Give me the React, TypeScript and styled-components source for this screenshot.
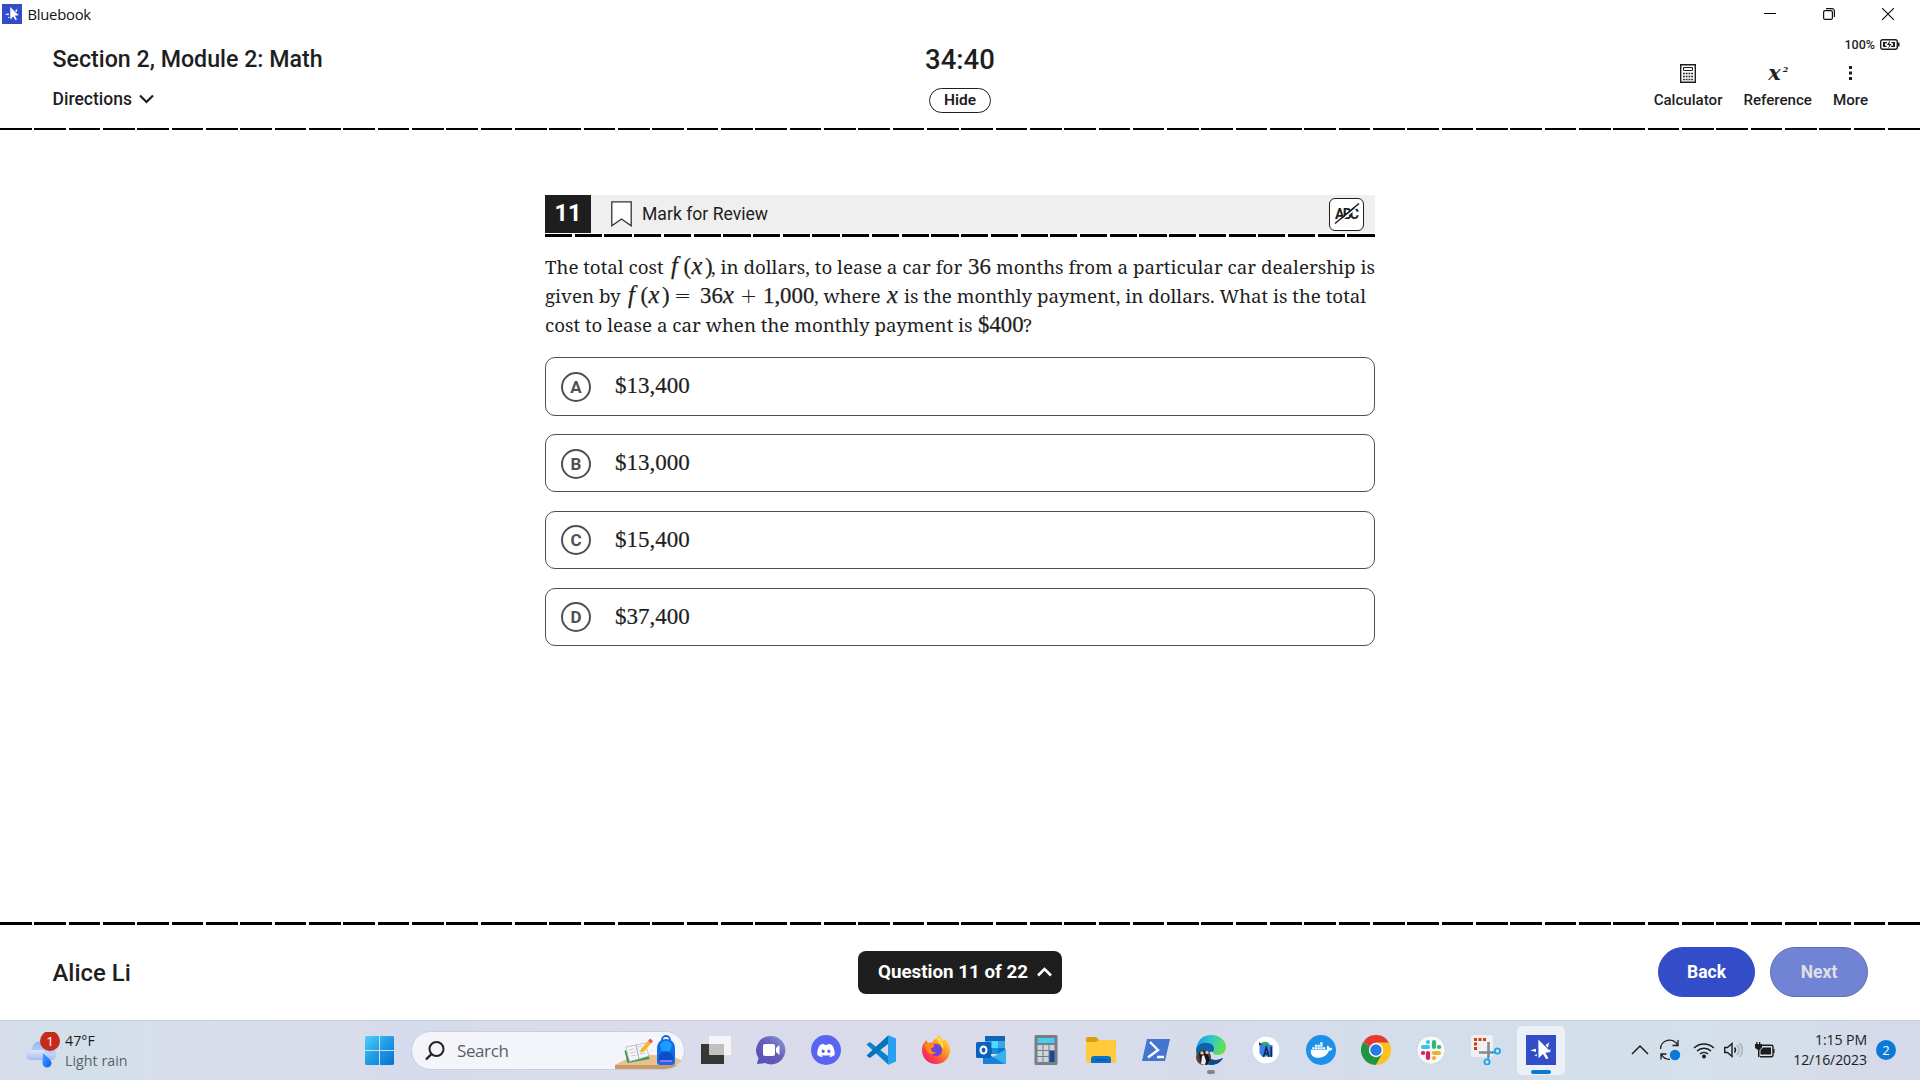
import React from "react";
import styled, { createGlobalStyle } from "styled-components";
import { FaDiscord, FaDocker } from "react-icons/fa6";

const GlobalStyle = createGlobalStyle`
  * { box-sizing: border-box; }
  body { margin: 0; background: #fff; overflow: hidden; }
  svg { display: block; flex: none; }
  button { font: inherit; padding: 0; margin: 0; border: 0; background: none; color: inherit; }
`;

const roboto = `Roboto, "Liberation Sans", sans-serif`;
const system = `"Open Sans", "Noto Sans", sans-serif`;
const math = `"Liberation Serif", serif`;

const Page = styled.div`
  width: 1920px;
  height: 1080px;
  display: flex;
  flex-direction: column;
  background: #fff;
  color: #1e1e1e;
  font-family: ${roboto};
`;

/* ---------- shared ---------- */

const DashRow = styled.div<{ $thick: number }>`
  display: flex;
  justify-content: space-between;
  height: ${(p) => p.$thick}px;
  flex: none;
`;
const Dash = styled.i<{ $w: number }>`
  width: ${(p) => p.$w}px;
  flex: none;
  background: #000;
`;
const Dashes = ({ count, w, thick }: { count: number; w: number; thick: number }) => (
  <DashRow $thick={thick}>
    {Array.from({ length: count }, (_, i) => (
      <Dash key={i} $w={w} />
    ))}
  </DashRow>
);

const Label = styled.span<{ $size: number; $weight?: number; $lh: number }>`
  font-size: ${(p) => p.$size}px;
  font-weight: ${(p) => p.$weight ?? 400};
  line-height: ${(p) => p.$lh}px;
  white-space: nowrap;
`;

/* ---------- window title bar ---------- */

const TitleBar = styled.div`
  height: 28px;
  flex: none;
  display: flex;
  align-items: center;
  padding: 0 26px 0 2px;
`;
const AppName = styled.span`
  margin-left: 5.5px;
  font: 400 14.8px/20px ${system};
  letter-spacing: -0.25px;
  color: #111;
`;
const WindowControls = styled.div`
  margin-left: auto;
  display: flex;
  gap: 47px;
`;

const StarLogo = ({ size }: { size: number }) => (
  <svg width={size} height={size} viewBox="0 0 30 30">
    <rect width="30" height="30" fill="#324dc7" />
    <path d="M12.300 4.500 24.800 17l-5.400.7 3 5.600-2.200 1-3.200-5.400-4.500 4.300z" fill="#fff" />
    <path d="M4.300 15.300 10 13.700v3.200zM23.300 7.300l-1.500 5.400-2.300-2.400zM25.200 14.600l-2.700.5 1.200 1.200zM8.500 20.500l2.300-1.800v2.600z" fill="#fff" />
  </svg>
);

/* ---------- exam header ---------- */

const Header = styled.header`
  height: 100px;
  flex: none;
  display: grid;
  grid-template-columns: 1fr 1fr 1fr;
`;
const HeaderLeft = styled.div`
  padding: 17px 0 0 52.5px;
  display: flex;
  flex-direction: column;
  gap: 15px;
`;
const DirectionsButton = styled.button`
  display: flex;
  align-items: center;
  gap: 7px;
`;
const HeaderCenter = styled.div`
  padding-top: 18px;
  display: flex;
  flex-direction: column;
  align-items: center;
  gap: 14px;
`;
const HideButton = styled.button`
  width: 62px;
  height: 25px;
  padding-bottom: 1px;
  border: 1px solid #1e1e1e;
  border-radius: 13px;
  display: flex;
  justify-content: center;
  align-items: center;
`;
const HeaderRight = styled.div`
  display: flex;
  flex-direction: column;
  align-items: flex-end;
  padding-top: 10px;
`;
const PowerStatus = styled.div`
  display: flex;
  align-items: center;
  gap: 5px;
  height: 14px;
  margin-right: 20px;
  svg { margin-bottom: 1px; }
`;
const Tools = styled.div`
  display: flex;
  gap: 21px;
  margin: 10px 52px 0 0;
`;
const Tool = styled.button`
  display: flex;
  flex-direction: column;
  align-items: center;
  gap: 6px;
`;
const ToolIcon = styled.span`
  height: 22px;
  display: flex;
  align-items: center;
`;
const Formula = styled.span`
  font: italic 700 21px/22px "DejaVu Serif", serif;
  display: flex;
  align-items: flex-start;
  padding-left: 1px;
`;
const FormulaPower = styled.span`
  font-size: 8px;
  line-height: 14px;
  margin-left: 2px;
`;

/* ---------- question ---------- */

const Content = styled.main`
  flex: 1;
  display: flex;
  justify-content: center;
  padding-top: 65px;
`;
const Question = styled.section`
  width: 830px;
`;
const QuestionBar = styled.div`
  height: 38px;
  margin-bottom: 1px;
  background: #efefef;
  display: flex;
  align-items: center;
  padding-right: 11px;
`;
const QuestionNumber = styled.div`
  width: 46px;
  height: 38px;
  background: #1e1e1e;
  color: #fff;
  text-align: center;
  font-size: 23.5px;
  font-weight: 700;
  line-height: 36px;
`;
const MarkButton = styled.button`
  display: flex;
  align-items: center;
  gap: 10px;
  margin-left: 20px;
`;
const CrossOutButton = styled.button`
  margin-left: auto;
  width: 35px;
  height: 33px;
  border: 1px solid #1e1e1e;
  border-radius: 6px;
  background: #fff;
  display: flex;
  align-items: center;
  justify-content: center;
`;
const Prompt = styled.div`
  padding-top: 15px;
  height: 120px;
`;
const Line = styled.div`
  display: flex;
  align-items: baseline;
  height: 29px;
  line-height: 29px;
  white-space: pre;
`;
const Prose = styled.span<{ $w: number }>`
  width: ${(p) => p.$w}px;
  flex: none;
  font-family: "Noto Serif", "DejaVu Serif Condensed", serif;
  font-size: 18.74px;
`;
const Term = styled.span<{ $w: number; $italic?: boolean }>`
  width: ${(p) => p.$w}px;
  flex: none;
  font-family: ${math};
  font-size: ${(p) => (p.$italic ? 24.5 : 22.8)}px;
  font-style: ${(p) => (p.$italic ? "italic" : "normal")};
  line-height: ${(p) => (p.$italic ? 27 : 29)}px;
  -webkit-text-stroke: 0.25px #1e1e1e;
`;
const Operator = styled.span<{ $w: number }>`
  width: ${(p) => p.$w}px;
  flex: none;
  font: 200 20.5px/24px "DejaVu Sans", sans-serif;
`;
const FunctionOfX = ({ w }: { w: number }) => (
  <>
    <Term $w={12.5} $italic>f</Term>
    <Term $w={8}>(</Term>
    <Term $w={13.5} $italic>x</Term>
    <Term $w={w - 34}>)</Term>
  </>
);
const Choices = styled.div`
  display: flex;
  flex-direction: column;
  gap: 18.4px;
  padding-top: 0.2px;
`;
const Choice = styled.button`
  height: 58.4px;
  border: 1px solid #505050;
  border-radius: 10px;
  display: flex;
  align-items: center;
  padding-left: 15px;
`;
const ChoiceLetter = styled.span`
  width: 30px;
  height: 30px;
  margin-top: 1px;
  border: 2px solid #505050;
  border-radius: 50%;
  color: #505050;
  font-size: 17px;
  font-weight: 700;
  line-height: 26px;
  text-align: center;
`;
const ChoiceValue = styled.span`
  margin-left: 24px;
  font: 400 23px/30px ${math};
  -webkit-text-stroke: 0.2px #1e1e1e;
`;

/* ---------- exam footer ---------- */

const Footer = styled.footer`
  height: 95px;
  flex: none;
  display: grid;
  grid-template-columns: 1fr auto 1fr;
  align-items: center;
  padding: 0 52px 1px;
`;
const Student = styled.div`
  padding: 1px 0 0 0.5px;
  font-size: 23.9px;
  font-weight: 500;
  line-height: 28px;
`;
const NavButton = styled.button`
  width: 204px;
  height: 43px;
  border-radius: 8px;
  background: #1e1e1e;
  color: #fff;
  display: flex;
  align-items: center;
  padding-left: 20px;
  gap: 9px;
`;
const Actions = styled.div`
  display: flex;
  justify-content: flex-end;
  gap: 15px;
`;
const ActionButton = styled.button<{ $muted?: boolean }>`
  width: ${(p) => (p.$muted ? 98 : 97)}px;
  height: 50px;
  border-radius: 25px;
  border: 1px solid ${(p) => (p.$muted ? "#6270a8" : "#324dc7")};
  background: ${(p) => (p.$muted ? "#7083d5" : "#324dc7")};
  color: ${(p) => (p.$muted ? "#e0e0e4" : "#fff")};
`;

/* ---------- taskbar ---------- */

const Taskbar = styled.nav`
  height: 60px;
  flex: none;
  display: flex;
  align-items: center;
  border-top: 1px solid #c6ccdc;
  background: linear-gradient(
    90deg,
    #d6dcea 0,
    #d2e0e9 90px,
    #d7deea 170px,
    #d9dcea 340px,
    #d5dbed 400px,
    #dadceb 600px,
    #d9dbea 1000px,
    #d5dceb 1300px,
    #d3e0ea 1640px,
    #d5dfea 1780px,
    #d6d9e9 1880px
  );
  font-family: ${system};
`;
const Weather = styled.div`
  width: 339px;
  display: flex;
  align-items: center;
  padding-left: 26px;
  gap: 5px;
`;
const WeatherText = styled.div`
  display: flex;
  flex-direction: column;
`;
const WeatherLine = styled.span<{ $dim?: boolean }>`
  font-size: 14.2px;
  line-height: 20px;
  letter-spacing: 0.05px;
  color: ${(p) => (p.$dim ? "#5c6068" : "#1c1c1c")};
`;
const StartButton = styled.button`
  margin-left: 26px;
  width: 29px;
`;
const SearchBox = styled.div`
  margin-left: 17px;
  width: 274px;
  height: 39px;
  border-radius: 20px;
  border: 1px solid #c9cedd;
  background: #f3f5fa;
  display: flex;
  align-items: center;
  padding-left: 13px;
  overflow: hidden;
`;
const SearchText = styled.span`
  margin-left: 12px;
  font-size: 17px;
  line-height: 24px;
  letter-spacing: -0.4px;
  color: #5b5e66;
  flex: 1;
`;
const Apps = styled.div`
  display: flex;
  margin-left: 3.5px;
  height: 59px;
  align-items: center;
`;
const AppSlot = styled.button`
  width: 55px;
  height: 59px;
  display: flex;
  flex-direction: column;
  align-items: center;
  padding-top: 5px;
`;
const AppTile = styled.span<{ $active?: boolean }>`
  width: 48px;
  height: 49px;
  border-radius: 5px;
  background: ${(p) => (p.$active ? "#ecf0f7" : "transparent")};
  display: flex;
  flex-direction: column;
  align-items: center;
  padding-top: 9px;
`;
const Running = styled.i<{ $active?: boolean }>`
  width: ${(p) => (p.$active ? 20 : 8)}px;
  height: 4px;
  margin-top: 5px;
  border-radius: 2px;
  background: ${(p) => (p.$active ? "#0a7ad8" : "#80858c")};
`;
const Tray = styled.div`
  margin-left: auto;
  display: flex;
  align-items: center;
  padding: 0 24px 1px 0;
`;
const TrayIcons = styled.div`
  display: flex;
  align-items: center;
  gap: 10px;
  margin-right: 17px;
`;
const Clock = styled.div`
  width: 75px;
  display: flex;
  flex-direction: column;
  align-items: flex-end;
  font-size: 14.1px;
  line-height: 20px;
  letter-spacing: -0.1px;
  white-space: nowrap;
  color: #1c1c1c;
`;
const Count = styled.span`
  margin-left: 9px;
  width: 20px;
  height: 20px;
  border-radius: 50%;
  background: #0a7ad8;
  color: #fff;
  font-size: 13px;
  line-height: 20px;
  text-align: center;
`;

const Icon = ({ children }: { children: React.ReactNode }) => (
  <svg width="30" height="30" viewBox="0 0 30 30">
    {children}
  </svg>
);

const WeatherIcon = () => (
  <svg width="34" height="38" viewBox="0 0 34 38">
    <defs>
      <linearGradient id="cloud" x1="0" y1="0" x2="0" y2="1">
        <stop offset="0" stopColor="#8fb4f0" />
        <stop offset="1" stopColor="#d5e2f8" />
      </linearGradient>
      <linearGradient id="cloudFront" x1="0" y1="0" x2="0" y2="1">
        <stop offset="0" stopColor="#dde7fa" />
        <stop offset="1" stopColor="#a3bdf0" />
      </linearGradient>
      <linearGradient id="drop" x1="0" y1="0" x2="1" y2="1">
        <stop offset="0" stopColor="#4aa3ff" />
        <stop offset="1" stopColor="#0a5cf0" />
      </linearGradient>
    </defs>
    <path d="M6 17a9 9 0 0 1 17-3 7 7 0 0 1 7 8 5 5 0 0 1-5 6H6a5.500 5.500 0 0 1 0-11z" fill="url(#cloud)" />
    <path d="M5 18h11a6 6 0 0 1 5 4h9a5 5 0 0 1-5 6H6a5 5 0 0 1-6-5 5 5 0 0 1 5-5z" fill="url(#cloudFront)" />
    <path d="M17 21c5 5 8.500 7 8.500 10a4.500 4.500 0 0 1-9 0c0-3 .5-6 .5-10z" fill="url(#drop)" />
    <circle cx="24" cy="9" r="10" fill="#c42b1c" />
    <text x="24" y="14" textAnchor="middle" fontSize="13.500" fill="#fff" fontFamily='"Open Sans", sans-serif'>
      1
    </text>
  </svg>
);

const StartIcon = () => (
  <svg width="29" height="29" viewBox="0 0 29 29">
    <defs>
      <linearGradient id="win" gradientUnits="userSpaceOnUse" x1="0" y1="0" x2="29" y2="29">
        <stop offset="0" stopColor="#4fd0fb" />
        <stop offset=".5" stopColor="#1f9be6" />
        <stop offset="1" stopColor="#0473d0" />
      </linearGradient>
    </defs>
    <path d="M1 0h13v14H0V1zM15 0h13l1 1v13H15zM0 15h14v14H1l-1-1zM15 15h14v13l-1 1H15z" fill="url(#win)" />
  </svg>
);

const SearchArt = () => (
  <svg width="70" height="37" viewBox="0 0 70 37">
    <path d="M1 33 20 23h36l13 6-8 7H1z" fill="#e9c08e" />
    <path d="M1 33h63l-4 4H1z" fill="#c79a68" />
    <path d="m10.500 19 3 12 22-4-1-4-20 4-2.500-9z" fill="#2f9e4f" />
    <path d="m12 15 10-2 3 14-9.500 2.500zM22 13l9-2 4 13-10 3z" fill="#f6f6fa" stroke="#a9abb5" strokeWidth=".7" />
    <path d="m15 18 5-1m-4 4 5-1m-4 4 5-1m2-8 4-1m-3 5 5-1m-4 4 5-1" stroke="#c4c7d2" />
    <path d="m27 17 7-8 3 2.500-7 8-4 1z" fill="#f7b32b" />
    <path d="m34 9 2-2.500 3 2.500-2 2.500z" fill="#ef5350" />
    <path d="M48 8a4 4 0 0 1 8 0" fill="none" stroke="#1b66d8" strokeWidth="1.800" />
    <path d="M43 17c0-7 4-10 9-10s9 3 9 10v12c0 3-1 4-3 4H46c-2 0-3-1-3-4z" fill="#0c6fe8" />
    <path d="M46 14c1-4 3-5 6-5s5 1 6 5l-2 5h-8z" fill="#1e9bff" />
    <path d="M45 25c0-4 3-5 7-5s7 1 7 5v4H45z" fill="#0a4fc4" />
    <path d="M46 29h12" stroke="#a66bf0" strokeWidth="2" />
  </svg>
);

const TaskViewIcon = () => (
  <Icon>
    <path d="M0 9h23v20H0z" fill="#363632" />
    <path d="M8 1h22v19H8z" fill="#f5f5f5" />
    <path d="M8 9h15v11H8z" fill="#bfc0bf" />
  </Icon>
);
const ChatIcon = () => (
  <Icon>
    <defs>
      <linearGradient id="chat" x1="0" y1="1" x2="1" y2="0">
        <stop offset="0" stopColor="#5050b8" />
        <stop offset=".55" stopColor="#6c5cb8" />
        <stop offset="1" stopColor="#7fa6dd" />
      </linearGradient>
    </defs>
    <path d="M15 1a14.200 14.200 0 1 1-6 27L1 29l1.500-6A14.200 14.200 0 0 1 15 1z" fill="url(#chat)" />
    <rect x="7" y="9" width="12" height="12" rx="2" fill="#fff" />
    <path d="m20 13 3.500-3v10L20 17z" fill="#fff" />
  </Icon>
);
const DiscordIcon = () => (
  <Icon>
    <circle cx="15" cy="15" r="15" fill="#5865f2" />
    <FaDiscord x="5.500" y="6" width="19" height="19" size={19} color="#fff" />
  </Icon>
);
const CodeIcon = () => (
  <Icon>
    <path d="M.5 9.500 3 7.500c.6-.5 1-.5 1.600 0L22 21v8.500z" fill="#0a84cc" />
    <path d="M.5 20.500 3 22.500c.6.5 1 .5 1.600 0L22 9V.5z" fill="#0672b8" />
    <path d="M22 0 30 3.500v23L22 30z" fill="#28a2f0" />
  </Icon>
);
const FirefoxIcon = () => (
  <Icon>
    <defs>
      <linearGradient id="fox" x1="1" y1="0" x2=".1" y2="1">
        <stop offset="0" stopColor="#fff44f" />
        <stop offset=".4" stopColor="#ff9a24" />
        <stop offset=".75" stopColor="#ff3b48" />
        <stop offset="1" stopColor="#e31587" />
      </linearGradient>
    </defs>
    <path d="M15 29C7 29 1 23 1 15c0-4 1-6 3-8l1-2 2 3 5-1c-1-2 3-3 4-4l1-3c3 2 4 4 5 6l2-2c3 3 5 7 5 11 0 8-6 14-14 14z" fill="url(#fox)" />
    <circle cx="15" cy="15" r="6.200" fill="#7542d8" />
    <path d="M4 9c4-2 6 0 9 1 1 2-1 3-3 3 0 3 2 5 5 4-1 3-7 3-9-1-2-2-2-5-2-7z" fill="#ff8a16" />
    <path d="M16 1c5 3 7 8 6 13l-2-3c0-4-5-4-4-10z" fill="#ffdf3c" />
  </Icon>
);
const OutlookIcon = () => (
  <Icon>
    <path d="M9 1h20v18H9z" fill="#1066b5" />
    <path d="M9 6h7v7H9zM22 6h7v7h-7z" fill="#32a9e7" />
    <path d="M16 6h6v7h-6z" fill="#50d9ff" />
    <path d="M16 13h6v6h-6z" fill="#1490df" />
    <path d="M22 13h7v6h-7z" fill="#0f78c8" />
    <path d="m7 16 12 7 11-9v15H7z" fill="#1b80d8" />
    <path d="m30 14-13 8 12 7h1z" fill="#36b1ef" />
    <rect y="7" width="15" height="16" rx="1.500" fill="#0a63bb" />
    <ellipse cx="7.500" cy="15" rx="3" ry="3.500" fill="none" stroke="#fff" strokeWidth="2" />
  </Icon>
);
const CalcAppIcon = () => (
  <Icon>
    <rect x="3.500" width="23" height="30" rx="1.500" fill="#777e86" />
    <path d="M6.500 3h17v5h-17z" fill="#45cdf2" />
    <path d="M6.500 10h5v5h-5zM12.500 10h5v5h-5zM18.500 10h5v5h-5zM6.500 16h5v5h-5zM12.500 16h5v5h-5zM6.500 22h5v5h-5zM12.500 22h5v5h-5z" fill="#cdd3d8" />
    <path d="M18.500 16h5v11h-5z" fill="#174a92" />
  </Icon>
);
const FolderIcon = () => (
  <Icon>
    <path d="M0 4c0-1 .6-2 2-2h8l3 3h17v10H0z" fill="#dc9c0c" />
    <path d="M0 7h10l3-2h15c1.400 0 2 .5 2 2v19c0 1.500-.6 2-2 2H2c-1.400 0-2-.5-2-2z" fill="#ffcb3d" />
    <path d="M5 28v-4c0-2 1-3 3-3h14c2 0 3 1 3 3v4z" fill="#0c72c8" />
    <path d="M9 25h12" stroke="#064b91" />
  </Icon>
);
const ShellIcon = () => (
  <Icon>
    <path d="M6 4h23l-5 22H1z" fill="#4475d1" />
    <path d="m9 7 8 8-10 7.500M16 22h7" fill="none" stroke="#fff" strokeWidth="2.400" />
  </Icon>
);
const EdgeIcon = () => (
  <Icon>
    <defs>
      <linearGradient id="edge" x1="0" y1="0" x2="1" y2=".3">
        <stop offset="0" stopColor="#1396dc" />
        <stop offset=".5" stopColor="#2fc4cf" />
        <stop offset="1" stopColor="#64df53" />
      </linearGradient>
    </defs>
    <path d="M0 15C1 5 7 0 15 0c9 0 15 6 15 12 0 5-4 8-8 8-4 0-5-1-5-3 3-3 1-8-5-8C6 9 2 11 0 15z" fill="url(#edge)" />
    <path d="M0 15c1-5 6-8 11-7 6 0 9 5 6 9-2-1-5 1-5 4 1 4 7 6 15 2-3 5-7 7-12 7C7 30 0 24 0 15z" fill="#0d61ad" />
    <path d="M12 20c0 4 7 7 15 3-3 5-8 7-13 7z" fill="#114a8b" />
    <circle cx="7.500" cy="22.500" r="7.500" fill="#55433c" />
    <path d="M3 19c0-4 8-4 9 1l2 5-3 5H7l-3-4z" fill="#16161a" />
    <path d="m6 21 2-1 2 6-1 4-4-1z" fill="#ecebed" />
    <circle cx="6" cy="18" r="1.800" fill="#e5bda5" />
    <circle cx="11" cy="17.500" r="1.700" fill="#e5bda5" />
  </Icon>
);
const StudioIcon = () => (
  <Icon>
    <circle cx="15" cy="15" r="13.300" fill="#fff" />
    <path d="M8.500 10h13v11.500H11l-2.500-3.500z" fill="#3b7bea" />
    <path d="M9 10.500c.5-5 9.500-5 10 0z" fill="#34a867" />
    <path d="m8 7 3.500 3H8z" fill="#063a4a" />
    <path d="m12.500 22 2.800-9.500 2.800 9.500m-4.500-3.200h3.600M20.300 12v10" fill="none" stroke="#0d2b4d" strokeWidth="1.600" />
  </Icon>
);
const DockerIcon = () => (
  <Icon>
    <circle cx="15" cy="15" r="15" fill="#1d91ea" />
    <FaDocker x="4.500" y="4" width="23" height="21" size={22} color="#fff" />
  </Icon>
);
const ChromeIcon = () => (
  <Icon>
    <path d="M15 15 2 7.500A15 15 0 0 1 28 7.500z" fill="#e33b2e" />
    <path d="M2 7.500A15 15 0 0 0 15 30l6.500-11.300L15 15z" fill="#229544" />
    <path d="M28 7.500A15 15 0 0 1 15 30l6.500-11.300L15 7.500z" fill="#fcc31e" />
    <circle cx="15" cy="15" r="7.200" fill="#fff" />
    <circle cx="15" cy="15" r="5.700" fill="#2b78e8" />
  </Icon>
);
const SlackIcon = () => (
  <Icon>
    <circle cx="15" cy="15" r="14.300" fill="#f8f8f8" stroke="#c9ccd3" strokeWidth=".8" />
    <g strokeWidth="4.200" strokeLinecap="round" fill="none">
      <path d="M7 12h5" stroke="#36c5f0" />
      <path d="M12 7v.1" stroke="#36c5f0" />
      <path d="M18 7v5" stroke="#2eb67d" />
      <path d="M23 12h.1" stroke="#2eb67d" />
      <path d="M18 18h5" stroke="#ecb22e" />
      <path d="M18 23v.1" stroke="#ecb22e" />
      <path d="M12 18v5" stroke="#e01e5a" />
      <path d="M7 18h.1" stroke="#e01e5a" />
    </g>
  </Icon>
);
const SnipIcon = () => (
  <Icon>
    <rect width="22" height="22" rx="2" fill="#f0f0f2" />
    <path d="M3 4.500h13M4.500 7.500V16" fill="none" stroke="#d83b01" strokeWidth="3" strokeDasharray="3 1.500" />
    <path d="M8 17.500h14M17.500 7v15" stroke="#858b92" strokeWidth="2.600" />
    <circle cx="26.500" cy="16" r="2.700" fill="none" stroke="#1ba5ea" strokeWidth="1.800" />
    <circle cx="16" cy="27" r="2.600" fill="none" stroke="#1ba5ea" strokeWidth="1.800" />
    <path d="m21 17.500 3-.5m-6.500 4.500-.5 3" stroke="#1ba5ea" strokeWidth="1.800" />
  </Icon>
);

type App = { name: string; icon: React.ReactNode; running?: boolean; active?: boolean };
const apps: App[] = [
  { name: "task", icon: <TaskViewIcon /> },
  { name: "chat", icon: <ChatIcon /> },
  { name: "discord", icon: <DiscordIcon /> },
  { name: "code", icon: <CodeIcon /> },
  { name: "firefox", icon: <FirefoxIcon /> },
  { name: "outlook", icon: <OutlookIcon /> },
  { name: "calc", icon: <CalcAppIcon /> },
  { name: "files", icon: <FolderIcon /> },
  { name: "shell", icon: <ShellIcon /> },
  { name: "edge", icon: <EdgeIcon />, running: true },
  { name: "studio", icon: <StudioIcon /> },
  { name: "docker", icon: <DockerIcon /> },
  { name: "chrome", icon: <ChromeIcon /> },
  { name: "slack", icon: <SlackIcon /> },
  { name: "snip", icon: <SnipIcon /> },
  { name: "bluebook", icon: <StarLogo size={30} />, running: true, active: true },
];

const choices = [
  ["A", "$13,400"],
  ["B", "$13,000"],
  ["C", "$15,400"],
  ["D", "$37,400"],
];

export default function App() {
  return (
    <Page>
      <GlobalStyle />
      <TitleBar>
        <StarLogo size={20} />
        <AppName>Bluebook</AppName>
        <WindowControls>
          <svg width="12" height="12" viewBox="0 0 12 12">
            <path d="M0 5.500h12" stroke="#000" />
          </svg>
          <svg width="12" height="12" viewBox="0 0 12 12" fill="none" stroke="#111" strokeWidth="1.200">
            <rect x=".6" y="2.600" width="8.800" height="8.800" rx="1.500" />
            <path d="M3 .6h6A2.400 2.400 0 0 1 11.400 3v6" />
          </svg>
          <svg width="12" height="12" viewBox="0 0 12 12">
            <path d="m0 0 12 12M12 0 0 12" stroke="#111" strokeWidth="1.200" />
          </svg>
        </WindowControls>
      </TitleBar>

      <Header>
        <HeaderLeft>
          <Label $size={23.2} $weight={500} $lh={28}>
            Section 2, Module 2: Math
          </Label>
          <DirectionsButton>
            <Label $size={17.5} $weight={500} $lh={22}>
              Directions
            </Label>
            <svg width="15" height="10" viewBox="0 0 15 10">
              <path d="m1 1.500 6.500 6.500L14 1.500" fill="none" stroke="#1e1e1e" strokeWidth="2.200" />
            </svg>
          </DirectionsButton>
        </HeaderLeft>
        <HeaderCenter>
          <Label $size={27.5} $weight={500} $lh={28}>
            34:40
          </Label>
          <HideButton>
            <Label $size={15.5} $weight={600} $lh={22}>
              Hide
            </Label>
          </HideButton>
        </HeaderCenter>
        <HeaderRight>
          <PowerStatus>
            <Label $size={12.5} $weight={500} $lh={14}>
              100%
            </Label>
            <svg width="20" height="11" viewBox="0 0 20 11">
              <rect x=".7" y=".7" width="16.600" height="9.600" rx="2" fill="#fff" stroke="#1e1e1e" strokeWidth="1.400" />
              <path d="M18 3.500h1.500v4H18z" fill="#1e1e1e" />
              <path d="M3 3h4v1.300H5v2.400h1.500V8H3zM11.500 3H15v5h-4V6.700h2V4.300h-1.500z" fill="#1e1e1e" />
              <path d="M10 1 7 6h2.200L8 10l3.500-5H9.300z" fill="#1e1e1e" />
            </svg>
          </PowerStatus>
          <Tools>
            <Tool>
              <ToolIcon>
                <svg width="16" height="19" viewBox="0 0 16 19">
                  <path d="M.7.700h14.600v17.600H.7z" fill="#fff" stroke="#1e1e1e" strokeWidth="1.400" />
                  <path d="M3.500 3.500h9v3h-9z" fill="none" stroke="#1e1e1e" />
                  <path d="M3 9.500h10M3 12.500h10M3 15.500h10" stroke="#1e1e1e" strokeWidth="1.600" strokeDasharray="1.800 .95" />
                </svg>
              </ToolIcon>
              <Label $size={15.1} $weight={500} $lh={20}>
                Calculator
              </Label>
            </Tool>
            <Tool>
              <ToolIcon>
                <Formula>
                  x<FormulaPower>2</FormulaPower>
                </Formula>
              </ToolIcon>
              <Label $size={15.1} $weight={500} $lh={20}>
                Reference
              </Label>
            </Tool>
            <Tool>
              <ToolIcon>
                <svg width="3" height="14" viewBox="0 0 3 14">
                  <path d="M0 0h3v3H0zM0 5.500h3v3H0zM0 11h3v3H0z" fill="#1e1e1e" />
                </svg>
              </ToolIcon>
              <Label $size={15.1} $weight={500} $lh={20}>
                More
              </Label>
            </Tool>
          </Tools>
        </HeaderRight>
      </Header>
      <Dashes count={56} w={31.67} thick={2} />

      <Content>
        <Question>
          <QuestionBar>
            <QuestionNumber>11</QuestionNumber>
            <MarkButton>
              <svg width="21" height="26" viewBox="0 0 21 26">
                <path d="M.8.800h19.400v24L10.500 18 .8 24.800z" fill="#fff" stroke="#333" strokeWidth="1.300" />
              </svg>
              <Label $size={17.6} $lh={36}>
                Mark for Review
              </Label>
            </MarkButton>
            <CrossOutButton>
              <svg width="26" height="22" viewBox="0 0 26 22">
                <text x="13" y="16" textAnchor="middle" textLength="24" fontSize="14" fontWeight="700" fill="#1e1e1e" fontFamily="Roboto, sans-serif">
                  ABC
                </text>
                <path d="M2 21.800 26 1.800" stroke="#fff" strokeWidth="1.500" />
                <path d="M1 20.500 25 .5" stroke="#1e1e1e" strokeWidth="1.500" />
              </svg>
            </CrossOutButton>
          </QuestionBar>
          <Dashes count={28} w={27.2} thick={3} />
          <Prompt>
            <Line>
              <Prose $w={126}>The total cost</Prose>
              <FunctionOfX w={40} />
              <Prose $w={257}>, in dollars, to lease a car for</Prose>
              <Term $w={28}>36</Term>
              <Prose $w={379}>months from a particular car dealership is</Prose>
            </Line>
            <Line>
              <Prose $w={83}>given by</Prose>
              <FunctionOfX w={46} />
              <Operator $w={26}>=</Operator>
              <Term $w={23}>36</Term>
              <Term $w={17} $italic>x</Term>
              <Operator $w={23}>+</Operator>
              <Term $w={51}>1,000</Term>
              <Prose $w={73}>, where</Prose>
              <Term $w={17} $italic>x</Term>
              <Prose $w={465}>is the monthly payment, in dollars. What is the total</Prose>
            </Line>
            <Line>
              <Prose $w={433}>cost to lease a car when the monthly payment is</Prose>
              <Term $w={45}>$400</Term>
              <Prose $w={20}>?</Prose>
            </Line>
          </Prompt>
          <Choices>
            {choices.map(([letter, value]) => (
              <Choice key={letter}>
                <ChoiceLetter>{letter}</ChoiceLetter>
                <ChoiceValue>{value}</ChoiceValue>
              </Choice>
            ))}
          </Choices>
        </Question>
      </Content>

      <Dashes count={56} w={31.67} thick={3} />
      <Footer>
        <Student>Alice Li</Student>
        <NavButton>
          <Label $size={18.75} $weight={700} $lh={24}>
            Question 11 of 22
          </Label>
          <svg width="15" height="10" viewBox="0 0 15 10">
            <path d="M1 8.500 7.500 2 14 8.500" fill="none" stroke="#fff" strokeWidth="2.600" />
          </svg>
        </NavButton>
        <Actions>
          <ActionButton>
            <Label $size={17.5} $weight={700} $lh={24}>
              Back
            </Label>
          </ActionButton>
          <ActionButton $muted>
            <Label $size={17.5} $weight={700} $lh={24}>
              Next
            </Label>
          </ActionButton>
        </Actions>
      </Footer>

      <Taskbar>
        <Weather>
          <WeatherIcon />
          <WeatherText>
            <WeatherLine>47°F</WeatherLine>
            <WeatherLine $dim>Light rain</WeatherLine>
          </WeatherText>
        </Weather>
        <StartButton>
          <StartIcon />
        </StartButton>
        <SearchBox>
          <svg width="20" height="20" viewBox="0 0 20 20" fill="none" stroke="#222" strokeWidth="2">
            <circle cx="11.500" cy="8" r="7" />
            <path d="m6.500 13-5.500 5.500" strokeWidth="2.400" />
          </svg>
          <SearchText>Search</SearchText>
          <SearchArt />
        </SearchBox>
        <Apps>
          {apps.map((app) => (
            <AppSlot key={app.name}>
              <AppTile $active={app.active}>
                {app.icon}
                {app.running && <Running $active={app.active} />}
              </AppTile>
            </AppSlot>
          ))}
        </Apps>
        <Tray>
          <TrayIcons>
            <svg width="18" height="20" viewBox="0 0 18 20">
              <path d="m1 14 8-8 8 8" fill="none" stroke="#1c1c1c" strokeWidth="1.500" />
            </svg>
            <svg width="22" height="22" viewBox="0 0 22 22" fill="none" stroke="#1c1c1c" strokeWidth="1.300">
              <path d="M1.500 10A9 9 0 0 1 18.500 6M19 1v5.500h-5.500M2 20.500V15h5.500M2.500 15.500A9 9 0 0 0 11 20.300" />
              <circle cx="16" cy="16" r="5.200" fill="#0a7ad8" stroke="none" />
            </svg>
            <svg width="23" height="20" viewBox="-2 0 23 20" fill="none" stroke="#1c1c1c" strokeWidth="1.500">
              <path d="M1 8a14.200 14.200 0 0 1 20 0M4 11a10 10 0 0 1 14 0M7 14a6 6 0 0 1 8 0" />
              <circle cx="11" cy="16.500" r="2" fill="#1c1c1c" stroke="none" />
            </svg>
            <svg width="20" height="20" viewBox="1 0 20 20" fill="none" stroke="#1c1c1c" strokeWidth="1.400">
              <path d="M1.700 7.500h2.800L9 3.500v13l-4.500-4H1.700z" />
              <path d="M11.500 7.500a4 4 0 0 1 0 5" />
              <path d="M14 5a7 7 0 0 1 0 10M16.500 3a10 10 0 0 1 0 14" stroke="#a5abb5" />
            </svg>
            <svg width="21" height="18" viewBox="0 0 21 18">
              <path d="M8 4.200h9.500a1.500 1.500 0 0 1 1.500 1.500v8.600a1.500 1.500 0 0 1-1.500 1.500H6" fill="none" stroke="#1c1c1c" strokeWidth="1.400" />
              <path d="M9 6.500h8v7H6.500V9zM19 8h1.500v4H19zM1 3h1.200V1h1.300v2h1.500V1h1.300v2H8v3.500L5.500 9v7H4V9L1 7z" fill="#1c1c1c" />
            </svg>
          </TrayIcons>
          <Clock>
            <span>1:15 PM</span>
            <span>12/16/2023</span>
          </Clock>
          <Count>2</Count>
        </Tray>
      </Taskbar>
    </Page>
  );
}
